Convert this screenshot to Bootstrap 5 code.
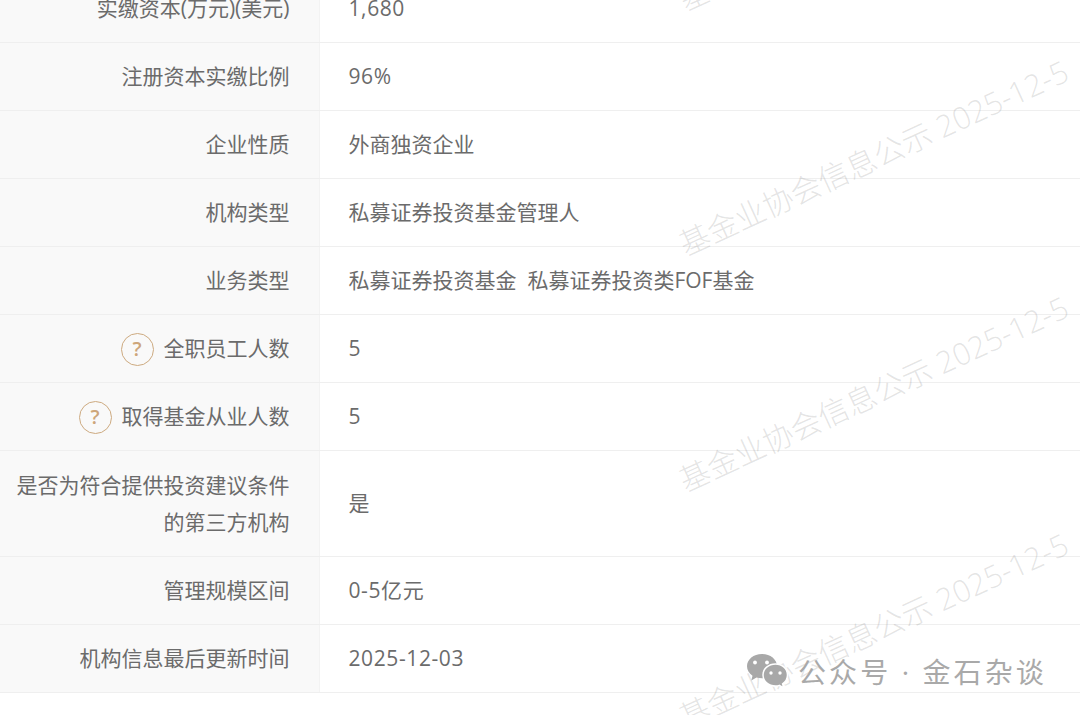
<!DOCTYPE html>
<html lang="zh-CN">
<head>
<meta charset="utf-8">
<title>机构信息</title>
<link href="https://cdn.jsdelivr.net/npm/bootstrap@5.3.0/dist/css/bootstrap.min.css" rel="stylesheet">
<style>
html, body { height: 715px; overflow: hidden; background: #fff; }
body { font-family: "Open Sans", "Noto Sans CJK SC", sans-serif; position: relative; }
.info-table { table-layout: fixed; width: 100%; margin: -26px 0 0; border-collapse: collapse; }
.info-table th, .info-table td {
  font-size: 21px; font-weight: 400; line-height: 37.5px; color: #6b6b6b; height: 68px;
  border-bottom: 1px solid #efefef; vertical-align: middle; padding: 2px 0 0;
  background: #fff; box-shadow: none;
}
.info-table th { width: 319px; background: #f9f9f9; text-align: right; padding: 2px 29px 0 10px; border-right: 1px solid #f3f3f3; }
.info-table td { padding-left: 29px; }
.info-table td.num-cell { letter-spacing: .6px; }
.tall th, .tall td { height: 106px; }
.help-dot {
  display: inline-flex; align-items: center; justify-content: center; width: 33px; height: 33px;
  border: 1.5px solid #cdaa80; border-radius: 50%; color: #cda67a; font-size: 20px; font-weight: 600;
  line-height: 1; margin-right: 10px; vertical-align: 0;
}
.mark-layer { position: absolute; inset: 0; pointer-events: none; overflow: hidden; }
.wm {
  position: absolute; left: 687px; white-space: nowrap; transform-origin: 0 100%;
  transform: rotate(-24.6deg); font-size: 30.5px; font-weight: 300; line-height: 1; color: rgba(120,120,120,.2);
}
.wm-a { top: -16px; } .wm-b { top: 229px; } .wm-c { top: 465px; } .wm-d { top: 702px; }
.brand { position: absolute; left: 746px; top: 652px; gap: 8px; color: #a9a9a9; font-size: 28px; font-weight: 400; line-height: 40px; letter-spacing: 3.1px; }
.brand svg { width: 44px; height: 36px; flex: none; }
</style>
</head>
<body>
<table class="table info-table">
  <tbody>
    <tr><th scope="row">实缴资本(万元)(美元)</th><td class="num-cell">1,680</td></tr>
    <tr><th scope="row">注册资本实缴比例</th><td class="num-cell">96%</td></tr>
    <tr><th scope="row">企业性质</th><td>外商独资企业</td></tr>
    <tr><th scope="row">机构类型</th><td>私募证券投资基金管理人</td></tr>
    <tr><th scope="row">业务类型</th><td>私募证券投资基金&nbsp;&nbsp;私募证券投资类FOF基金</td></tr>
    <tr><th scope="row"><span class="help-dot">?</span>全职员工人数</th><td class="num-cell">5</td></tr>
    <tr><th scope="row"><span class="help-dot">?</span>取得基金从业人数</th><td class="num-cell">5</td></tr>
    <tr class="tall"><th scope="row">是否为符合提供投资建议条件的第三方机构</th><td>是</td></tr>
    <tr><th scope="row">管理规模区间</th><td class="num-cell">0-5亿元</td></tr>
    <tr><th scope="row">机构信息最后更新时间</th><td class="num-cell">2025-12-03</td></tr>
  </tbody>
</table>
<div class="mark-layer">
  <div class="wm wm-a">基金业协会信息公示 2025-12-5</div>
  <div class="wm wm-b">基金业协会信息公示 2025-12-5</div>
  <div class="wm wm-c">基金业协会信息公示 2025-12-5</div>
  <div class="wm wm-d">基金业协会信息公示 2025-12-5</div>
  <div class="brand d-flex align-items-center">
    <svg viewBox="0 0 44 36" aria-hidden="true">
      <path fill="#a8a8a8" d="M16 0C7.500 0 1 5.500 1 12.300c0 3.900 2.100 7.200 5.500 9.500L5.300 26.500l5.200-3c1.700.5 3.600.8 5.500.8 8.500 0 15-5.500 15-12.100C31 5.500 24.500 0 16 0Z"/>
      <circle cx="9" cy="8.500" r="1.900" fill="#fff"/><circle cx="21" cy="8.500" r="1.900" fill="#fff"/>
      <path fill="#a8a8a8" stroke="#fff" stroke-width="1.500" d="M29.500 10C22.500 10 17 14.800 17 21s5.500 11 12.500 11c1.300 0 2.600-.2 3.800-.6l4.400 2.600-1.100-4.200c3-2 4.900-5.200 4.900-8.800C41.500 14.800 36.300 10 29.500 10Z"/>
      <circle cx="25" cy="19" r="1.700" fill="#fff"/><circle cx="34" cy="19" r="1.700" fill="#fff"/>
    </svg>
    <span>公众号 · 金石杂谈</span>
  </div>
</div>
<script src="https://cdn.jsdelivr.net/npm/bootstrap@5.3.0/dist/js/bootstrap.bundle.min.js"></script>
</body>
</html>
